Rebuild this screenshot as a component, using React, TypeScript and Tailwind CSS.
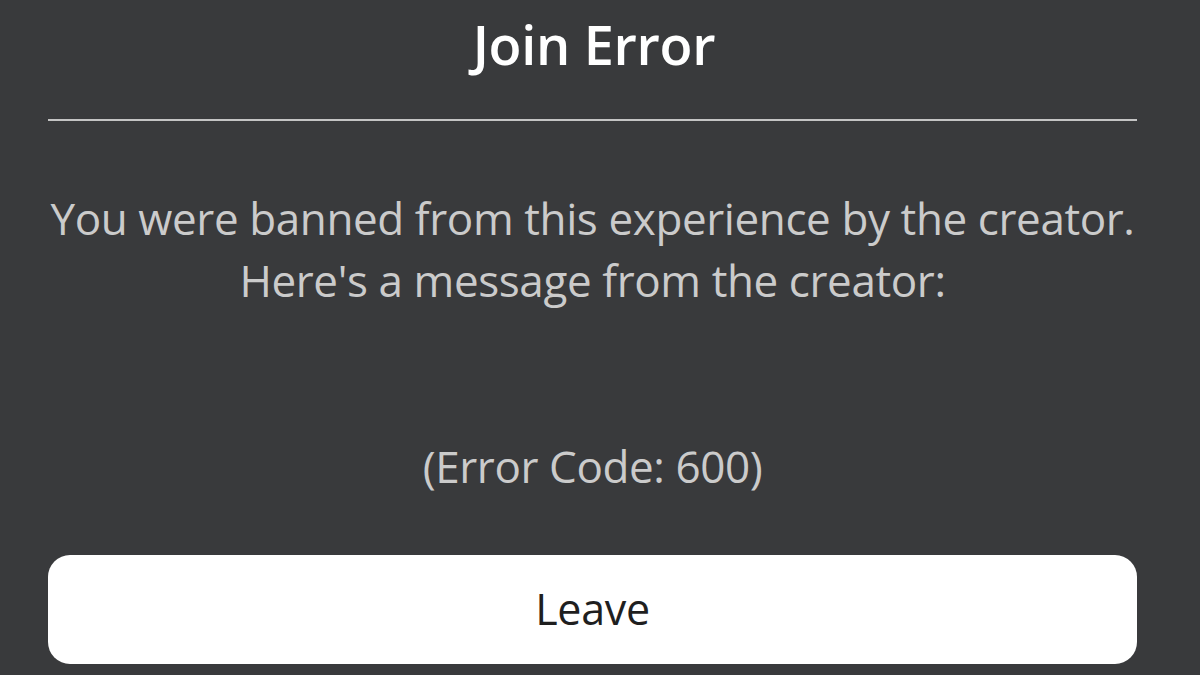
const JoinError = () => {
	return (
		<div className="w-[1200px] h-[675px] bg-[#393a3c] overflow-hidden font-['Open_Sans',sans-serif]">
			<div className="flex flex-col px-[48px] pt-[14px]">
				<h1 className="h-[60px] text-center text-[54px] leading-[60px] font-semibold text-white tracking-[-0.3px] pr-[12px]">Join Error</h1>
				<div className="mt-[45px] h-[2px] bg-[#c4c4c4] mr-[15px]" />
				<p className="mt-[66px] text-center text-[44px] leading-[62px] text-[#cbcbcb] tracking-[-0.4px] mr-[15px]">
					You were banned from this experience by the creator.
					<br />
					Here's a message from the creator:
				</p>
				<p className="mt-[124px] text-center text-[44px] leading-[62px] text-[#cbcbcb] tracking-[-0.4px] mr-[15px]">(Error Code: 600)</p>
				<button className="mt-[58px] h-[109px] mr-[15px] rounded-[22px] bg-white flex items-center justify-center">
					<span className="text-[43px] text-[#1f1f1f] tracking-[-0.3px]">Leave</span>
				</button>
			</div>
		</div>
	);
};

export default function App() {
	return <JoinError />;
}
